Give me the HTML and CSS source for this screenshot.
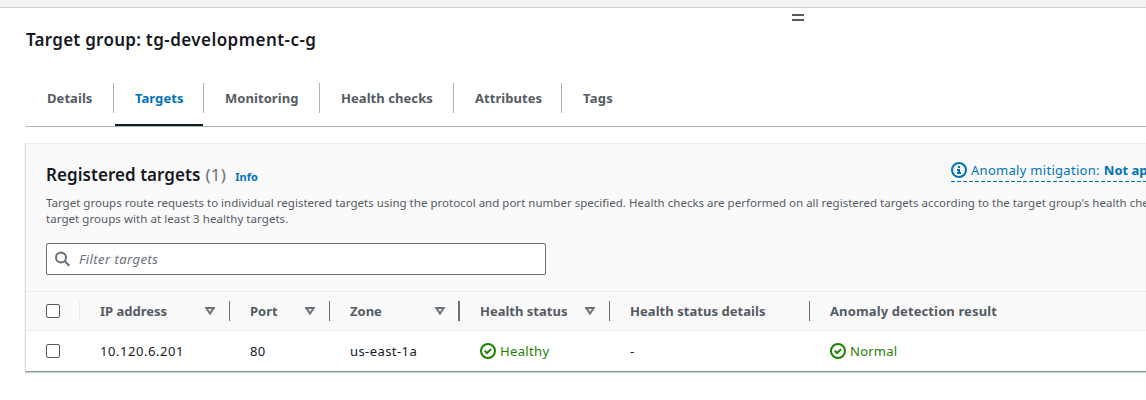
FILE: index.html
```html
<!DOCTYPE html>
<html lang="en">
<head>
<meta charset="utf-8">
<title>Target group</title>
<link rel="stylesheet" href="styles.css">
</head>
<body>
<svg class="defs" aria-hidden="true">
  <symbol id="sort" viewBox="0 0 10 8"><path d="M1.3 1h7.4L5 6.6z" fill="none" stroke="currentColor" stroke-width="2"/></symbol>
  <symbol id="check" viewBox="0 0 16 16"><circle cx="8" cy="8" r="7" fill="none" stroke="currentColor" stroke-width="2"/><path d="M4.7 7.7l2.4 2.3 4-3.9" fill="none" stroke="currentColor" stroke-width="2"/></symbol>
</svg>
<div class="splitter"></div>
<main class="panel">
  <div class="handle"></div>
  <h1 class="title">Target group: <span class="group-name">tg-development-c-g</span></h1>
  <nav class="tabs">
    <a class="tab details"><span>Details</span></a>
    <a class="tab targets active"><span>Targets</span></a>
    <a class="tab monitoring"><span>Monitoring</span></a>
    <a class="tab health"><span>Health checks</span></a>
    <a class="tab attributes"><span>Attributes</span></a>
    <a class="tab tags"><span>Tags</span></a>
  </nav>
  <section class="card">
    <header class="card-head">
      <div class="head-row">
        <h2 class="heading"><span class="heading-text">Registered targets</span><span class="count">(1)</span><a class="info">Info</a></h2>
        <a class="mitigation"><svg width="16" height="16" viewBox="0 0 16 16"><circle cx="8" cy="8" r="7" fill="none" stroke="currentColor" stroke-width="2"/><path d="M7 4h2v2H7zM6 7h3v3h1v2H6v-2h1V9H6z" fill="currentColor"/></svg><span class="mit-label">Anomaly mitigation:</span><b>Not applicable</b></a>
      </div>
      <p class="desc">Target groups route requests to individual registered targets using the protocol and port number specified. Health checks are performed on all registered targets according to the target group's health check settings.<br><span class="desc-end">target groups with at least 3 healthy targets.</span></p>
      <div class="filter"><svg width="16" height="16" viewBox="0 0 16 16"><circle cx="6" cy="6.5" r="5" fill="none" stroke="currentColor" stroke-width="2"/><path d="M9.5 10l4.8 4.8" stroke="currentColor" stroke-width="2"/></svg><span>Filter targets</span></div>
    </header>
    <div class="row head">
      <div class="cell pick"><i class="box"></i></div>
      <div class="cell ip"><span>IP address</span><svg class="sort"><use href="#sort"/></svg></div>
      <div class="cell port"><span>Port</span><svg class="sort"><use href="#sort"/></svg></div>
      <div class="cell zone"><span>Zone</span><svg class="sort"><use href="#sort"/></svg></div>
      <div class="cell status"><span>Health status</span><svg class="sort"><use href="#sort"/></svg></div>
      <div class="cell reason"><span>Health status details</span></div>
      <div class="cell anomaly"><span>Anomaly detection result</span></div>
    </div>
    <div class="row data">
      <div class="cell pick"><i class="box"></i></div>
      <div class="cell ip"><span>10.120.6.201</span></div>
      <div class="cell port"><span>80</span></div>
      <div class="cell zone"><span>us-east-1a</span></div>
      <div class="cell status ok"><svg class="check"><use href="#check"/></svg><span>Healthy</span></div>
      <div class="cell reason"><span>-</span></div>
      <div class="cell anomaly ok"><svg class="check"><use href="#check"/></svg><span>Normal</span></div>
    </div>
  </section>
</main>
</body>
</html>
```
FILE: styles.css
```css
* { box-sizing: border-box; }
body { margin: 0; height: 400px; overflow: hidden; background: #fff; color: #16191f; font: 13px/20px "Noto Sans", "Open Sans", sans-serif; white-space: nowrap; }
svg { display: block; flex: none; }
.defs { position: absolute; width: 0; height: 0; }
.splitter { height: 8px; background: #f2f3f3; border-bottom: 1px solid #ccc; }
.panel { padding-left: 26px; overflow: hidden; height: 392px; }
.handle { width: 12px; height: 7px; margin: 6px 0 0 766px; border: solid #545b64; border-width: 2px 0; }
.title { margin: 8px 0 0; height: 22px; font-size: 17px; line-height: 22px; font-weight: 600; letter-spacing: .26px; }
.group-name { letter-spacing: .45px; }
.tabs { display: flex; height: 76px; padding-top: 32px; border-bottom: 1px solid #aab7b8; color: #545b64; font-weight: 700; }
.tab { height: 43px; padding-left: 21px; flex: none; letter-spacing: .06px; }
.tab span { display: block; height: 30px; line-height: 30px; }
.tab:not(.tags) { background: linear-gradient(#aab7b8, #aab7b8) right top / 1px 30px no-repeat; }
.details { width: 88px; }
.targets { width: 90px; }
.monitoring { width: 116px; }
.health { width: 134px; }
.attributes { width: 108px; }
.tags { letter-spacing: .3px; }
.active { color: #0073bb; }
.active::after { content: ""; display: block; width: 88px; height: 2px; margin: 11px 0 0 -20px; background: #16191f; }
.card { width: 1240px; margin: 16px 0 0 -1px; border: 1px solid #eaeded; border-left-color: #d5dbdb; border-bottom-color: #879596; box-shadow: 0 1px 1px rgba(0,28,36,.2); }
.card-head { height: 147px; padding: 15px 20px 0; background: #fafafa; }
.head-row { display: flex; height: 36px; }
.heading { display: flex; align-items: baseline; flex: none; width: 905px; margin: 5px 0 0; font-size: 17px; line-height: 22px; font-weight: 600; letter-spacing: .05px; }
.count { margin-left: 5px; color: #687078; font-weight: 400; letter-spacing: .25px; }
.info { margin-left: 9px; color: #0073bb; font-size: 11px; font-weight: 700; }
.mitigation { display: flex; align-items: center; flex: none; height: 23px; padding-bottom: 1px; color: #0073bb; background: repeating-linear-gradient(90deg, #0073bb 0 4px, transparent 4px 6px) left bottom / 100% 1px no-repeat; }
.mit-label { margin: 0 4px; letter-spacing: .29px; }
.desc { margin: 0; color: #545b64; font-size: 11.5px; line-height: 16px; letter-spacing: .015px; }
.desc-end { letter-spacing: .055px; }
.filter { display: flex; align-items: center; width: 500px; height: 32px; margin-top: 16px; padding-left: 8px; border: 1px solid #687078; border-radius: 2px; background: #fff; color: #687078; }
.filter span { margin-left: 8px; font-style: italic; letter-spacing: .45px; }
.row { display: flex; align-items: center; height: 40px; background: #fff; }
.head { background: #fafafa; border: solid #eaeded; border-width: 1px 0; color: #545b64; font-weight: 700; }
.cell { display: flex; align-items: center; height: 20px; padding-left: 20px; flex: none; }
.head .cell { border-right: 1px solid #687078; }
.head .pick { border-color: #eaeded; }
.pick { width: 54px; }
.ip { width: 150px; }
.port { width: 100px; }
.zone { width: 130px; }
.status { width: 150px; }
.reason { width: 200px; }
.head .anomaly { border: 0; letter-spacing: .12px; }
.head .reason { letter-spacing: .05px; }
.head .zone { border-right-width: 2px; }
.data .ip { letter-spacing: .54px; }
.data .port, .data .zone { letter-spacing: .42px; }
.data .status { letter-spacing: .35px; }
.data .anomaly { letter-spacing: .25px; }
.box { width: 14px; height: 14px; border: 1px solid #545b64; border-radius: 2px; background: #fff; }
.sort { width: 10px; height: 8px; margin: 0 14px 0 auto; color: #687078; }
.zone .sort { margin-right: 13px; }
.check { width: 16px; height: 16px; margin-right: 4px; }
.ok { color: #1d8102; }
```
